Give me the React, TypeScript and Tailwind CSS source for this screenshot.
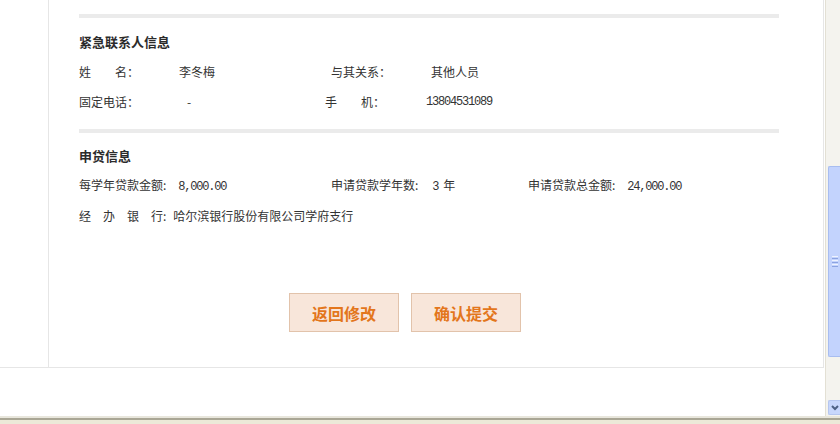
import React from 'react'

const cjk = "font-['SimSun','Noto_Sans_CJK_SC',sans-serif]"
const mono = "font-['Liberation_Mono',monospace] tracking-[-1.2px]"

function Row({ children }: { children: React.ReactNode }) {
  return <div className="flex h-[30px] items-center text-[12px] text-[#333]">{children}</div>
}

export default function App() {
  return (
    <div className={`flex h-[424px] w-[840px] flex-col overflow-hidden bg-[#ece9d8] ${cjk}`}>
      <div className="flex h-[416px]">
        {/* page */}
        <div className="w-[825px] bg-white">
          <div className="flex h-[368px] w-[824px] border-b border-r border-[#e6e6e6]">
            <div className="w-[49px] shrink-0 border-r border-[#e6e6e6]" />
            <div className="flex-1 pl-[30px] pt-[14px]">
              <div className="h-[4px] w-[700px] bg-[#ebebeb]" />

              <div className="mt-[9px] flex h-[30px] items-center text-[13px] font-bold text-[#2b2b2b]">紧急联系人信息</div>
              <Row>
                <span className="w-[100px]">姓　　名：</span>
                <span className="w-[152px]">李冬梅</span>
                <span className="w-[100px]">与其关系：</span>
                <span>其他人员</span>
              </Row>
              <Row>
                <span className="w-[108px]">固定电话：</span>
                <span className="w-[138px]">-</span>
                <span className="w-[101px]">手　　机：</span>
                <span className={mono}>13804531089</span>
              </Row>

              <div className="mt-[12px] h-[4px] w-[700px] bg-[#ebebeb]" />

              <div className="mt-[8px] flex h-[30px] items-center text-[13px] font-bold text-[#2b2b2b]">申贷信息</div>
              <Row>
                <span className="flex w-[252px] items-baseline">
                  每学年贷款金额:<span className={`${mono} ml-[12px]`}>8,000.00</span>
                </span>
                <span className="flex w-[197px] items-baseline">
                  申请贷款学年数:<span className={`${mono} ml-[14px]`}>3</span>
                  <span className="ml-[5px]">年</span>
                </span>
                <span className="flex items-baseline">
                  申请贷款总金额:<span className={`${mono} ml-[12px]`}>24,000.00</span>
                </span>
              </Row>
              <Row>
                <span className="flex">
                  经　办　银　行:<span className="ml-[7px]">哈尔滨银行股份有限公司学府支行</span>
                </span>
              </Row>

              <div className="mt-[62px] flex gap-[12px] pl-[210px]">
                <button className="h-[39px] w-[110px] border border-[#e2c3ab] bg-[#f8e6da] text-[16px] font-bold text-[#e3761c]">
                  返回修改
                </button>
                <button className="h-[39px] w-[110px] border border-[#e2c3ab] bg-[#f8e6da] text-[16px] font-bold text-[#e3761c]">
                  确认提交
                </button>
              </div>
            </div>
          </div>
        </div>

        {/* scrollbar */}
        <div className="flex w-[15px] flex-col border-l border-[#e3e0d4] bg-[#f4f3ee] pl-[2px]">
          <div className="h-[166px]" />
          <div className="flex h-[191px] items-center justify-center rounded-l-[2px] border border-r-0 border-[#a8bdf0] bg-[#c3d3fd]">
            <div className="flex w-[6px] flex-col gap-[1px]">
              <div className="h-[1px] bg-[#eef2fd]" />
              <div className="h-[1px] bg-[#8ca3e0]" />
              <div className="h-[1px] bg-[#eef2fd]" />
              <div className="h-[1px] bg-[#8ca3e0]" />
              <div className="h-[1px] bg-[#eef2fd]" />
              <div className="h-[1px] bg-[#8ca3e0]" />
            </div>
          </div>
          <div className="flex-1" />
          <div className="mb-[1px] flex h-[15px] items-center justify-center rounded-l-[2px] border border-r-0 border-[#b5c6f0] bg-[#c8d7fc]">
            <svg width="8" height="6" viewBox="0 0 8 6">
              <path d="M1 1 L4 4 L7 1" stroke="#4d6185" strokeWidth="2" fill="none" />
            </svg>
          </div>
        </div>
      </div>

      {/* window bottom */}
      <div className="h-[2px] bg-[#e8e6dc]" />
      <div className="h-[2px] bg-[#a9a695]" />
      <div className="flex-1 bg-[#ece9d8]" />
    </div>
  )
}
